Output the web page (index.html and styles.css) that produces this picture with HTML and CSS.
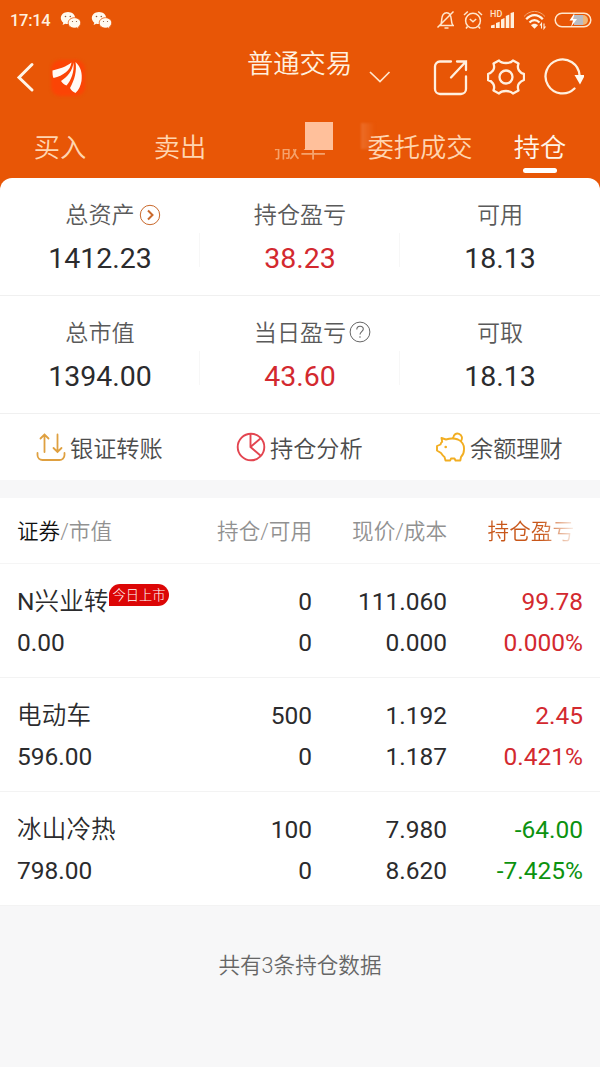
FILE: index.html
```html
<!DOCTYPE html>
<html lang="zh-CN">
<head>
    <meta charset="UTF-8">
    <meta name="viewport" content="width=device-width, initial-scale=1.0">
    <title>普通交易 - 持仓</title>
    <link rel="stylesheet" href="styles.css">
</head>
<body>
    <header class="header">
        <!-- Status bar -->
        <div class="status-bar">
            <span class="time">17:14</span>
            <svg class="wechat" viewBox="0 0 22 19">
                <path fill="#fffaf0" d="M8 1C3.700 1 .8 3.800.8 7.100c0 1.900 1 3.500 2.500 4.600l-.7 2.300 2.700-1.300c.9.3 1.800.4 2.700.4 4.300 0 7.200-2.700 7.200-6S12.300 1 8 1z"/>
                <path fill="#fffaf0" stroke="#e85606" stroke-width=".8" d="M14.500 6.700c-3.600 0-6.300 2.300-6.300 5.200s2.700 5.200 6.300 5.200c.8 0 1.600-.1 2.300-.4l2.200 1.200-.6-2c1.400-1 2.300-2.400 2.300-4 0-2.900-2.600-5.200-6.200-5.200z"/>
                <g fill="#8a5a3c"><circle cx="5.500" cy="5.500" r=".8"/><circle cx="10.300" cy="5.500" r=".8"/><circle cx="12.500" cy="10.500" r=".6"/><circle cx="16.500" cy="10.500" r=".6"/></g>
            </svg>
            <svg class="wechat wechat-second" viewBox="0 0 22 19">
                <path fill="#fffaf0" d="M8 1C3.700 1 .8 3.800.8 7.100c0 1.900 1 3.500 2.500 4.600l-.7 2.300 2.700-1.300c.9.3 1.800.4 2.700.4 4.300 0 7.200-2.700 7.200-6S12.300 1 8 1z"/>
                <path fill="#fffaf0" stroke="#e85606" stroke-width=".8" d="M14.500 6.700c-3.600 0-6.300 2.300-6.300 5.200s2.700 5.200 6.300 5.200c.8 0 1.600-.1 2.300-.4l2.200 1.200-.6-2c1.400-1 2.300-2.400 2.300-4 0-2.900-2.600-5.200-6.200-5.200z"/>
                <g fill="#8a5a3c"><circle cx="5.500" cy="5.500" r=".8"/><circle cx="10.300" cy="5.500" r=".8"/><circle cx="12.500" cy="10.500" r=".6"/><circle cx="16.500" cy="10.500" r=".6"/></g>
            </svg>
            <div class="status-icons">
                <svg width="20" height="20" viewBox="0 0 20 20" fill="none" stroke="#ffe6cc" stroke-width="1.500">
                    <path d="M3 15.500h15M4.500 15.500c1-2 1-3 1.200-6C6 5 8 2.700 10.700 2.700S15 5 15.300 9.500c.2 3 .5 4 1.500 6M8.500 18h4M1.500 17.500L17.500 1.500"/>
                </svg>
                <svg width="20" height="20" viewBox="0 0 20 20" fill="none" stroke="#ffe6cc" stroke-width="1.500">
                    <circle cx="10" cy="10.700" r="7.400"/><path d="M1 5L4.800 1.500M19 5l-3.800-3.500M6.800 9l3.200 2.700L13.200 9M4.500 16.500L3 18.500M15.500 16.500l1.500 2"/>
                </svg>
                <div class="signal">
                    <span class="hd">HD</span>
                    <svg width="25" height="18" viewBox="0 0 25 18" fill="#ffefdc">
                        <path d="M1 17v-2.500l3.700-1V17zM6 17v-5l3.700-1.200V17zM11 17V8.500L14.500 7v10zM15.800 17V5l3.500-1.500V17zM20.600 17V2l3.400-1v16z"/>
                    </svg>
                </div>
                <svg class="wifi" width="24" height="20" viewBox="0 0 24 20" fill="none" stroke="#fff3e3" stroke-width="2.200">
                    <path stroke="#f4a56e" stroke-width="1" d="M1 6.500C7-.3 16-.3 22 6.500"/>
                    <path d="M3.200 9.300C8 3.700 15 3.700 19.800 9.300M6.500 12.500c3-3.200 7-3.200 10 0"/>
                    <path fill="#fff3e3" stroke="none" d="M8 15.300c2-2 5-2 7 0l-3.500 3.500z"/>
                    <path stroke-width="1.100" d="M18.500 18.500V13.500l-1.500 2M21 13.500v5l1.500-2"/>
                </svg>
                <svg width="38" height="18" viewBox="0 0 38 18">
                    <rect x="1.200" y="2.200" width="35.600" height="13.600" rx="6.800" fill="none" stroke="#ffe6cc" stroke-width="1.500"/>
                    <path fill="#f0b678" d="M20 4h9a5 5 0 0 1 0 10h-9z"/><path fill="#b9bdc5" d="M20 4h9v10h-9z"/>
                    <path fill="#fff" d="M20.500 2l-5 7.500h3.500L17 16l6-8h-3.500z"/>
                </svg>
            </div>
        </div>

        <!-- Title bar -->
        <div class="title-bar">
            <svg class="back" width="20" height="32" viewBox="0 0 20 32" fill="none" stroke="#fff5e8" stroke-width="3" stroke-linecap="round">
                <path d="M17 2.500L4 15.500l13 12.500"/>
            </svg>
            <svg class="logo" width="40" height="42" viewBox="0 0 40 42">
                <rect class="logo-glow" x="3" y="3" width="34" height="36" rx="9" fill="#fb4405"/>
                <g fill="#fffaf5">
                    <path d="M4.500 13.500C12 11.500 18 10 23.500 5.500c-1 8-8 13-18 15.500C4.500 19 4.500 17 4.500 13.500z"/>
                    <path d="M25.500 5.500c1 9.500-2.500 18-7 23-2.500-1-4-2.500-5.500-4.500C19.500 19.500 24.500 14 25.500 5.500z"/>
                    <path d="M27.500 5c5.500 5 7 11.500 6 19-1 5-2.500 9-6 12-2.500-1-4.500-3-5.500-5C26.500 23 29 14 27.500 5z"/>
                </g>
            </svg>
            <h1 class="title">普通交易</h1>
            <svg class="caret" width="22" height="14" viewBox="0 0 22 14" fill="none" stroke="#ffe6cc" stroke-width="1.700">
                <path d="M1 1l10 9.500L20.500 1"/>
            </svg>
            <div class="tools">
                <svg width="36" height="38" viewBox="0 0 36 38" fill="none" stroke="#fff0df" stroke-width="2.300" stroke-linecap="round">
                    <path d="M18 3.500H7a5 5 0 0 0-5 5V31a5 5 0 0 0 5 5h21a5 5 0 0 0 5-5V18.500M24 3.500h9V12M33 3.500L18 19.500"/>
                </svg>
                <svg width="38" height="38" viewBox="0 0 38 38" fill="none" stroke="#fff0df" stroke-width="2.300" stroke-linejoin="round">
                    <path d="M12 2.500Q14 5 19 5T26 2.500L31.500 5.500Q30 9.500 32 12.500T37 16V22Q34 23 32 25.500T31.500 32.500L26 35.500Q24 33 19 33T12 35.500L6.500 32.500Q8 28.500 6 25.500T1 22V16Q4 15 6 12.500T6.500 5.500z"/>
                    <circle cx="19" cy="19" r="6.500"/>
                </svg>
                <svg width="41" height="38" viewBox="0 0 41 38" fill="none" stroke="#fff0df" stroke-width="2.300" stroke-linecap="round">
                    <path d="M31.500 30.500A17 17 0 1 1 36.500 17"/><path fill="#fffaf0" stroke="none" d="M31.500 17H42L37 26.500z"/>
                </svg>
            </div>
        </div>

        <nav class="tabs">
            <a class="tab">买入</a>
            <a class="tab">卖出</a>
            <a class="tab"><span class="cancel-text">撤单</span><i class="block"></i><i class="smudge"></i></a>
            <a class="tab">委托成交</a>
            <a class="tab active">持仓</a>
        </nav>
    </header>

    <!-- Account summary -->
    <section class="summary">
        <div class="row">
            <div class="cell">
                <div class="label">总资产<svg class="more" width="22" height="22" viewBox="0 0 22 22" fill="none" stroke="#c9692c"><circle cx="11" cy="11" r="9.700"/><path stroke-width="2" d="M9 6.500l4.500 4.500L9 15.500"/></svg></div>
                <div class="value">1412.23</div>
            </div>
            <div class="cell">
                <div class="label">持仓盈亏</div>
                <div class="value red">38.23</div>
            </div>
            <div class="cell">
                <div class="label">可用</div>
                <div class="value">18.13</div>
            </div>
        </div>
        <div class="row">
            <div class="cell">
                <div class="label">总市值</div>
                <div class="value">1394.00</div>
            </div>
            <div class="cell">
                <div class="label">当日盈亏<svg class="help" width="22" height="22" viewBox="0 0 22 22" fill="none" stroke="#666"><circle cx="11" cy="11" r="9.900"/><path stroke-width="1.100" d="M7.800 8.500c0-4.300 6.500-4.300 6.500-.5 0 2.500-3.300 2.800-3.300 5.500M11 15.300v1.500"/></svg></div>
                <div class="value red">43.60</div>
            </div>
            <div class="cell">
                <div class="label">可取</div>
                <div class="value">18.13</div>
            </div>
        </div>
    </section>

    <section class="actions">
        <div class="action">
            <svg width="30" height="30" viewBox="0 0 30 30" fill="none" stroke="#dfa040" stroke-width="1.800" stroke-linecap="round">
                <path d="M1.500 21v2a5 5 0 0 0 5 5h17a5 5 0 0 0 5-5v-2M8.500 20V3M4.500 6.500l4-4 4 4M21.500 2.500V19.500M17.500 16l4 4 4-4"/>
            </svg>
            <span>银证转账</span>
        </div>
        <div class="action">
            <svg width="30" height="30" viewBox="0 0 30 30" fill="none" stroke="#e34550" stroke-width="1.900">
                <circle cx="15" cy="15" r="13.300"/><path d="M14.500 1.700V15l10.500 9M14.500 15L25 6"/>
            </svg>
            <span>持仓分析</span>
        </div>
        <div class="action">
            <svg width="30" height="30" viewBox="0 0 30 30" fill="none" stroke="#f2ae22" stroke-width="1.900" stroke-linejoin="round">
                <path d="M5.500 6L10 7.500c3-1 8-1.500 12 0 4 2 6.300 5.500 6 10 0 4-1.300 6-3 7.500l-.7 3.500H19.500L18.500 26.500h-3.500l-.8 2H9.500L8.500 25C7 24 6 22.500 5 21L1 18.500V14L4.500 12.500c.3-1.200.7-2 1.700-2.700zM17 6.500C17.500 2 20.500.8 23 1.800c3.200 1.200 3.700 4.700 2 7.200"/>
                <circle cx="9.700" cy="15" r="1.300" fill="#f2ae22" stroke="none"/>
            </svg>
            <span>余额理财</span>
        </div>
    </section>

    <!-- Holdings -->
    <section class="holdings">
        <div class="holding head">
            <div><b>证券</b>/市值</div>
            <div>持仓/可用</div>
            <div>现价/成本</div>
            <div class="profit-head">持仓盈亏</div>
        </div>
        <div class="holding">
            <div>N<span class="name">兴业转</span><span class="badge">今日上市</span><br>0.00</div>
            <div>0<br>0</div>
            <div>111.060<br>0.000</div>
            <div class="red">99.78<br>0.000%</div>
        </div>
        <div class="holding">
            <div><span class="name">电动车</span><br>596.00</div>
            <div>500<br>0</div>
            <div>1.192<br>1.187</div>
            <div class="red">2.45<br>0.421%</div>
        </div>
        <div class="holding">
            <div><span class="name">冰山冷热</span><br>798.00</div>
            <div>100<br>0</div>
            <div>7.980<br>8.620</div>
            <div class="green">-64.00<br>-7.425%</div>
        </div>
    </section>

    <p class="total">共有3条持仓数据</p>
</body>
</html>
```
FILE: styles.css
```css
* {
    box-sizing: border-box;
}
body {
    margin: 0;
    min-height: 1067px;
    background-color: #f7f7f8;
    color: #2b2b2d;
    font-family: Roboto, "Noto Sans CJK SC", sans-serif;
    font-weight: 400;
}
svg {
    display: block;
    flex: none;
}

/* Orange header */
.header {
    height: 192px;
    background-color: #e85606;
    color: #ffe3c8;
}
.status-bar {
    display: flex;
    align-items: center;
    height: 40px;
    padding: 0 8px 0 10px;
}
.time {
    width: 50px;
    font-size: 16.5px;
    font-weight: 500;
    letter-spacing: -0.3px;
    color: #fff0df;
}
.wechat {
    width: 22px;
    height: 19px;
}
.wechat-second {
    margin-left: 9px;
}
.status-icons {
    display: flex;
    align-items: center;
    gap: 7px;
    margin-left: auto;
}
.signal {
    position: relative;
}
.hd {
    position: absolute;
    left: 0;
    top: -1px;
    font-size: 9px;
    font-weight: 500;
    line-height: 9px;
}
.wifi {
    margin-left: 1px;
}
.title-bar {
    display: flex;
    align-items: center;
    height: 76px;
    padding: 0 16px 0 15px;
}
.logo {
    margin-left: 13px;
}
.logo-glow {
    filter: blur(1.5px);
}
.title {
    width: 106px;
    margin: 0 0 28px 159px;
    font-size: 26.3px;
    font-weight: 350;
    line-height: 30px;
    color: #fff0df;
    white-space: nowrap;
}
.caret {
    margin-left: 16px;
}
.tools {
    display: flex;
    gap: 18px;
    margin: 0 0 2px auto;
}
.tabs {
    display: grid;
    grid-template-columns: repeat(5, 120px);
    height: 62px;
}
.tab {
    position: relative;
    font-size: 26.3px;
    font-weight: 350;
    line-height: 64px;
    text-align: center;
    color: #ffd5b0;
}
.tab.active {
    color: #fff5e8;
}
.tab.active::after {
    content: "";
    position: absolute;
    left: 43px;
    top: 52px;
    width: 34px;
    height: 5px;
    border-radius: 3px;
    background-color: #fff;
}
.cancel-text {
    display: block;
    opacity: 0.6;
    clip-path: inset(33px 0 0 0);
}
.block {
    position: absolute;
    left: 65px;
    top: 6px;
    width: 28px;
    height: 28px;
    background-color: #ffc09b;
}
.smudge {
    position: absolute;
    left: 121px;
    top: 7px;
    width: 14px;
    height: 26px;
    background: linear-gradient(to right, #ec6d28, #e85606);
    filter: blur(1px);
}

/* Summary card */
.summary {
    position: relative;
    margin-top: -14px;
    border-radius: 12px 12px 0 0;
    background-color: #fff;
}
.row {
    display: grid;
    grid-template-columns: repeat(3, 200px);
    height: 118px;
    padding-top: 21px;
    border-bottom: 1px solid #f0f0f0;
}
.cell {
    position: relative;
    text-align: center;
}
.cell + .cell::before {
    content: "";
    position: absolute;
    left: -1px;
    top: 34px;
    height: 34px;
    border-left: 1px solid #f7f7f7;
}
.label {
    display: flex;
    justify-content: center;
    align-items: center;
    font-size: 23.1px;
    font-weight: 350;
    line-height: 34px;
    color: #5a5a5a;
}
.more {
    margin: -3px -26px 0 4px;
}
.help {
    margin: -4px -25px 0 3px;
}
.value {
    margin-top: 6px;
    font-size: 28.5px;
    line-height: 40px;
}
.red {
    color: #d3292f;
}
.green {
    color: #0c920f;
}

.actions {
    display: grid;
    grid-template-columns: repeat(3, 200px);
    height: 66px;
    background-color: #fff;
}
.action {
    display: flex;
    align-items: center;
    gap: 4px;
    padding-left: 36px;
    font-size: 23.2px;
    font-weight: 350;
    color: #4c4c4c;
}

/* Holdings table */
.holdings {
    margin-top: 18px;
    background-color: #fff;
}
.holding {
    display: grid;
    grid-template-columns: 165px 130px 135px 136px;
    height: 114px;
    padding: 17px 17px 0;
    border-bottom: 1px solid #f3f3f3;
    font-size: 24.5px;
    line-height: 41px;
    white-space: nowrap;
}
.holding > div + div {
    text-align: right;
}
.holding.head {
    height: 66px;
    padding-top: 0;
    border-bottom-color: #f5f5f5;
    font-size: 21.6px;
    font-weight: 350;
    line-height: 67px;
    color: #919191;
}
.head b {
    font-weight: 350;
    color: #111;
}
.profit-head {
    margin-right: 9px;
    background: linear-gradient(to right, #c8571a 74%, #f7e3d7 98%);
    background-clip: text;
    color: transparent;
}
.name {
    font-weight: 350;
    letter-spacing: 0.2px;
}
.badge {
    display: inline-block;
    height: 22px;
    margin-top: 3px;
    padding: 0 4px;
    border-radius: 11px 11px 11px 0;
    background-color: #dc0606;
    color: #fff;
    font-size: 13.2px;
    font-weight: 300;
    line-height: 23px;
    vertical-align: top;
}
.total {
    margin: 43px 0 0;
    font-size: 21.6px;
    font-weight: 350;
    line-height: 34px;
    text-align: center;
    color: #666;
}
```
